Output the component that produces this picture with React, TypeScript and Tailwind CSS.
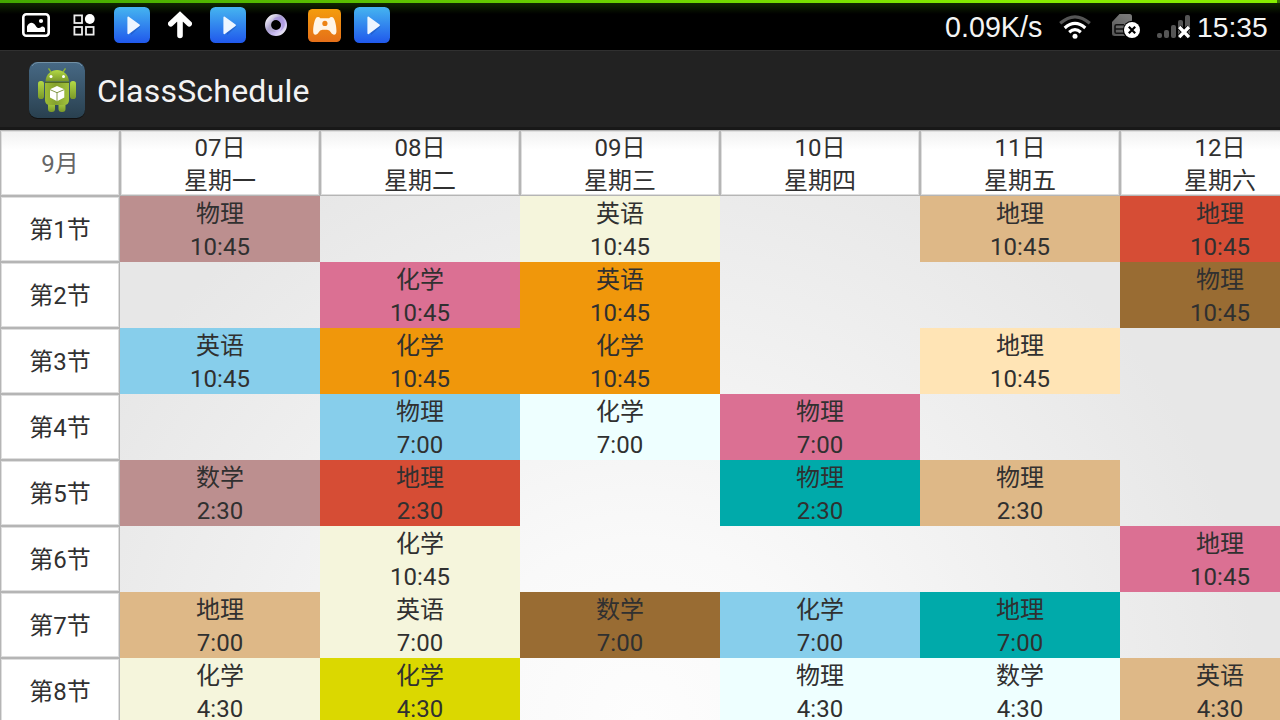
import React from 'react';

const days: [string, string][] = [
  ['07日', '星期一'], ['08日', '星期二'], ['09日', '星期三'],
  ['10日', '星期四'], ['11日', '星期五'], ['12日', '星期六'],
];

const colors = {
  rose: 'bg-[#bc8f8f]', cream: 'bg-[#f5f5dc]', tan: 'bg-[#deb887]', red: 'bg-[#d64d35]',
  pink: 'bg-[#db7093]', orange: 'bg-[#f0970b]', brown: 'bg-[#996c33]', sky: 'bg-[#87ceeb]',
  moccasin: 'bg-[#ffe4b5]', azure: 'bg-[#eeffff]', teal: 'bg-[#00aaaa]', yellow: 'bg-[#dbd800]',
};

type Lesson = [string, keyof typeof colors] | null;

const rows: { time: string; cells: Lesson[] }[] = [
  { time: '10:45', cells: [['物理', 'rose'], null, ['英语', 'cream'], null, ['地理', 'tan'], ['地理', 'red']] },
  { time: '10:45', cells: [null, ['化学', 'pink'], ['英语', 'orange'], null, null, ['物理', 'brown']] },
  { time: '10:45', cells: [['英语', 'sky'], ['化学', 'orange'], ['化学', 'orange'], null, ['地理', 'moccasin'], null] },
  { time: '7:00', cells: [null, ['物理', 'sky'], ['化学', 'azure'], ['物理', 'pink'], null, null] },
  { time: '2:30', cells: [['数学', 'rose'], ['地理', 'red'], null, ['物理', 'teal'], ['物理', 'tan'], null] },
  { time: '10:45', cells: [null, ['化学', 'cream'], null, null, null, ['地理', 'pink']] },
  { time: '7:00', cells: [['地理', 'tan'], ['英语', 'cream'], ['数学', 'brown'], ['化学', 'sky'], ['地理', 'teal'], null] },
  { time: '4:30', cells: [['化学', 'cream'], ['化学', 'yellow'], null, ['物理', 'azure'], ['数学', 'azure'], ['英语', 'tan']] },
];

function PlayIcon() {
  return (
    <svg width="36" height="36" viewBox="0 0 36 36" className="shrink-0">
      <defs>
        <linearGradient id="play" x1="0" y1="0" x2="0" y2="1">
          <stop offset="0" stopColor="#45b5f0" />
          <stop offset="1" stopColor="#2058ec" />
        </linearGradient>
      </defs>
      <rect width="36" height="36" rx="5.5" fill="url(#play)" />
      <path d="M15 12.5 L26.5 19.5 L17 28 Z" fill="#1747a5" opacity=".4" />
      <path d="M14.3 10.5 L25 18.3 L14.3 26.3 Z" fill="#eef6ff" stroke="#eef6ff" strokeWidth="1.8" strokeLinejoin="round" />
    </svg>
  );
}

function PictureIcon() {
  return (
    <svg width="28" height="24" viewBox="0 0 28 24" className="shrink-0">
      <rect x="1.3" y="1.3" width="25.4" height="21.4" rx="3" fill="none" stroke="#fff" strokeWidth="2.6" />
      <path d="M5 19 V13.5 C7 9 11 8.5 13.5 12.5 C15.5 15.8 17.5 15.5 19.5 13.8 C21 13 22.5 14 23 15.5 V19 Z" fill="#fff" />
      <circle cx="19" cy="8" r="2.1" fill="#fff" />
    </svg>
  );
}

function AppsIcon() {
  return (
    <svg width="22" height="22" viewBox="0 0 22 22" className="shrink-0">
      <g fill="none" stroke="#eee" strokeWidth="1.8">
        <rect x="1.4" y="1.4" width="7.6" height="7.6" />
        <rect x="1.4" y="13" width="7.6" height="7.6" />
        <rect x="13" y="13" width="7.6" height="7.6" />
      </g>
      <circle cx="16.8" cy="5" r="4.9" fill="#fff" />
    </svg>
  );
}

function UpIcon() {
  return (
    <svg width="24" height="28" viewBox="0 0 24 28" className="shrink-0">
      <path d="M12 24.5 V5 M2.8 12.8 L12 4 L21.2 12.8" fill="none" stroke="#fff" strokeWidth="5.6" strokeLinejoin="miter" strokeLinecap="round" />
    </svg>
  );
}

function RingIcon() {
  return (
    <svg width="22" height="22" viewBox="0 0 22 22" className="shrink-0">
      <defs>
        <linearGradient id="ring" x1="0" y1="0" x2="1" y2="1">
          <stop offset="0" stopColor="#f0eef5" />
          <stop offset=".4" stopColor="#aaa0cf" />
          <stop offset=".7" stopColor="#c8b9f1" />
          <stop offset="1" stopColor="#eceaf4" />
        </linearGradient>
      </defs>
      <circle cx="11" cy="11" r="8" fill="none" stroke="url(#ring)" strokeWidth="6" />
      <path d="M8 6 Q10 2.5 15.5 2.8 Q20 6 19.8 11 Q19 15 15 17 Q18 13 15.8 9 Q13 5 8 6 Z" fill="#a894df" opacity=".75" />
      <path d="M6.3 9 Q5 15 11 18 Q6.5 18.5 4 15 Q3 11 6.3 9" fill="#b1a8c4" opacity=".7" />
    </svg>
  );
}

function GameIcon() {
  return (
    <svg width="33" height="33" viewBox="0 0 32 32" className="shrink-0">
      <defs>
        <linearGradient id="game" x1="0" y1="0" x2="0" y2="1">
          <stop offset="0" stopColor="#f49c0c" />
          <stop offset="1" stopColor="#e56f19" />
        </linearGradient>
      </defs>
      <rect width="32" height="32" rx="4.5" fill="url(#game)" />
      <path d="M8.5 8 Q10.5 7 12 9 H20.5 Q22 7 24 8 C26 9.5 27.6 16 27.6 21.5 C27.6 26 23.8 25.5 22.3 22.8 Q21 20 18.5 20 H14 Q11.5 20 10.2 22.8 C8.7 25.5 5 26 5 21.5 C5 16 6.5 9.5 8.5 8 Z" fill="#fff5e8" />
      <circle cx="16.4" cy="14" r="2.5" fill="#ed8314" />
    </svg>
  );
}

function WifiIcon() {
  return (
    <svg width="32" height="24" viewBox="0 0 32 24" className="shrink-0">
      <g fill="none" strokeWidth="3.2">
        <path d="M1.2 8.3 Q16 -4.7 30.8 8.3" stroke="#555" />
        <path d="M5.7 13 Q16 3.8 26.3 13" stroke="#fff" />
        <path d="M10.2 17.2 Q16 12.2 21.8 17.2" stroke="#fff" />
      </g>
      <circle cx="16" cy="21.3" r="2.5" fill="#fff" />
    </svg>
  );
}

function SimIcon() {
  return (
    <svg width="28" height="25" viewBox="0 0 28 25" className="shrink-0">
      <defs>
        <linearGradient id="sim" x1="0" y1="1" x2=".5" y2="0">
          <stop offset="0" stopColor="#555" />
          <stop offset="1" stopColor="#777" />
        </linearGradient>
      </defs>
      <path d="M0 8 L7.5 0 H17.5 Q20 0 20 2.5 V22 H2.5 Q0 22 0 19.5 Z" fill="url(#sim)" />
      <path d="M12 10.8 H4.5 Q3 10.8 3 12.3 V18 Q3 19.3 4.5 19.3 H12 M3 15 H12 M7 15 H12" fill="none" stroke="#111" strokeWidth="1.6" />
      <circle cx="20" cy="16" r="9.2" fill="#000" />
      <circle cx="20" cy="16" r="8" fill="#fff" />
      <path d="M16.8 12.8 L23.2 19.2 M23.2 12.8 L16.8 19.2" stroke="#000" strokeWidth="2.2" />
    </svg>
  );
}

function SignalIcon() {
  return (
    <svg width="34" height="24" viewBox="0 0 34 24" className="shrink-0">
      <g fill="#555">
        <rect x="0" y="18" width="5" height="5" rx="2" />
        <rect x="7" y="15" width="5" height="8" rx="2" />
        <rect x="14" y="10" width="5" height="13" rx="2" />
        <rect x="21" y="5" width="5" height="18" rx="2" />
        <rect x="28" y="0" width="5" height="23" rx="2" />
      </g>
      <path d="M22.2 12 L32 22.2 M32 12 L22.2 22.2" stroke="#000" strokeWidth="5" />
      <path d="M22.2 12 L32 22.2 M32 12 L22.2 22.2" stroke="#fff" strokeWidth="3.3" />
    </svg>
  );
}

function LauncherIcon() {
  return (
    <svg width="58" height="58" viewBox="0 0 58 58" className="shrink-0">
      <defs>
        <linearGradient id="tile" x1="0" y1="0" x2="0" y2="1">
          <stop offset="0" stopColor="#476985" />
          <stop offset="1" stopColor="#29404f" />
        </linearGradient>
        <linearGradient id="robot" x1="0" y1="0" x2="0" y2="1">
          <stop offset="0" stopColor="#b4da45" />
          <stop offset="1" stopColor="#79982a" />
        </linearGradient>
        <linearGradient id="body" x1="0" y1="0" x2="1" y2="0">
          <stop offset="0" stopColor="#9dbb35" />
          <stop offset=".45" stopColor="#84a12f" />
          <stop offset="1" stopColor="#a2c33c" />
        </linearGradient>
      </defs>
      <rect x="1" y="1" width="56" height="57" rx="8.5" fill="#111" />
      <rect x="1" y="1" width="56" height="56" rx="8.5" fill="url(#tile)" />
      <path d="M4 5 Q6 1.5 10 1.5 H48 Q52 1.5 54 5" fill="none" stroke="#7290a5" strokeWidth="1" />
      <g fill="url(#robot)">
        <path d="M23 11 L20.5 7.3 M35 11 L37.5 7.3" stroke="#8eb334" strokeWidth="1.4" />
        <path d="M17.5 20.5 C18 5 40 5 41 20.5 Z" />
        <rect x="10" y="20" width="6" height="18" rx="2.8" />
        <rect x="42" y="20" width="6" height="18" rx="2.8" />
        <rect x="20" y="40" width="7" height="11" rx="3" />
        <rect x="30.5" y="40" width="7" height="11" rx="3" />
      </g>
      <path d="M17 22 H41 V39 Q41 44 36 44 H22 Q17 44 17 39 Z" fill="url(#body)" />
      <path d="M17 21.5 H41" stroke="#52691f" strokeWidth="1" />
      <circle cx="23" cy="15.5" r="1.5" fill="#fff" />
      <circle cx="35.5" cy="15.5" r="1.5" fill="#fff" />
      <path d="M29 25 L36.3 28.3 V36.5 L29 40.2 L22 36.5 V28.3 Z" fill="#fff" />
      <path d="M22 28.6 L29 31.7 L36.3 28.6 M29 31.7 V40" fill="none" stroke="#758c35" strokeWidth=".9" />
    </svg>
  );
}

export default function App() {
  return (
    <div className="flex h-[720px] w-[1280px] flex-col overflow-hidden bg-black font-['Roboto','Noto_Sans_CJK_SC',sans-serif] text-[#303030]">
      <header className="h-[50px] shrink-0 bg-[linear-gradient(to_bottom,#102800_3px,#000_14px)]">
        <div className="h-[3px] bg-[linear-gradient(to_right,#43a800,#86ee00_80%,#86ee00_99.8%,#397500_99.8%)]" />
        <div className="flex h-[44px] items-center pl-[22px]">
          <PictureIcon />
          <div className="ml-[23px] flex"><AppsIcon /></div>
          <div className="ml-[19px] flex"><PlayIcon /></div>
          <div className="ml-[18px] flex"><UpIcon /></div>
          <div className="ml-[18px] flex"><PlayIcon /></div>
          <div className="ml-[19px] flex"><RingIcon /></div>
          <div className="ml-[21px] flex"><GameIcon /></div>
          <div className="ml-[13px] flex"><PlayIcon /></div>
          <div className="ml-[554px] mt-[3px] w-[115px] whitespace-nowrap pl-px font-['Liberation_Sans',sans-serif] text-[28.7px] leading-9 text-[#f4f4f4]">0.09K/s</div>
          <div className="mt-[3px] flex"><WifiIcon /></div>
          <div className="ml-[21px] mt-[3px] flex"><SimIcon /></div>
          <div className="ml-[17px] mt-[4px] flex"><SignalIcon /></div>
          <div className="ml-[6px] mt-[4px] whitespace-nowrap font-['Liberation_Sans',sans-serif] text-[28.3px] leading-9 text-[#f4f4f4]">15:35</div>
        </div>
      </header>
      <div className="flex h-20 shrink-0 items-center border-b-[3px] border-t border-b-[#181818] border-t-[#303030] bg-[#222] pl-7 pt-[2px]">
        <LauncherIcon />
        <h1 className="ml-[11px] pt-px text-[32px] leading-10 tracking-[0.22px] text-[#f3f3f3]">ClassSchedule</h1>
      </div>
      <main className="w-[1320px] flex-1 bg-[radial-gradient(circle_at_640px_590px,#fdfdfd_0px,#f9f9f9_180px,#e7e7e7_620px)] text-2xl leading-[33px]">
        <div className="flex h-[66px] bg-[linear-gradient(to_bottom,#f0f0f0,#fff_20px)]">
          <div className="flex w-[120px] items-center justify-center border border-[#b5b5b5] pt-[2px] text-[#666] shadow-[inset_0_0_0_1px_#dedede]">9月</div>
          {days.map(([date, weekday]) => (
            <div key={date} className="flex w-[200px] flex-col items-center border border-[#b5b5b5] pt-px shadow-[inset_0_0_0_1px_#dedede]">
              <span>{date}</span>
              <span>{weekday}</span>
            </div>
          ))}
        </div>
        {rows.map((row, index) => (
          <div key={index} className="flex h-[66px]">
            <div className="flex w-[120px] items-center justify-center border border-[#b5b5b5] bg-white pt-[2px] shadow-[inset_0_0_0_1px_#dedede]">第{index + 1}节</div>
            {row.cells.map((cell, day) => (
              <div key={day} className={`flex w-[200px] flex-col items-center pt-[2px] ${cell ? colors[cell[1]] : ''}`}>
                {cell && <><span>{cell[0]}</span><span>{row.time}</span></>}
              </div>
            ))}
          </div>
        ))}
      </main>
    </div>
  );
}
